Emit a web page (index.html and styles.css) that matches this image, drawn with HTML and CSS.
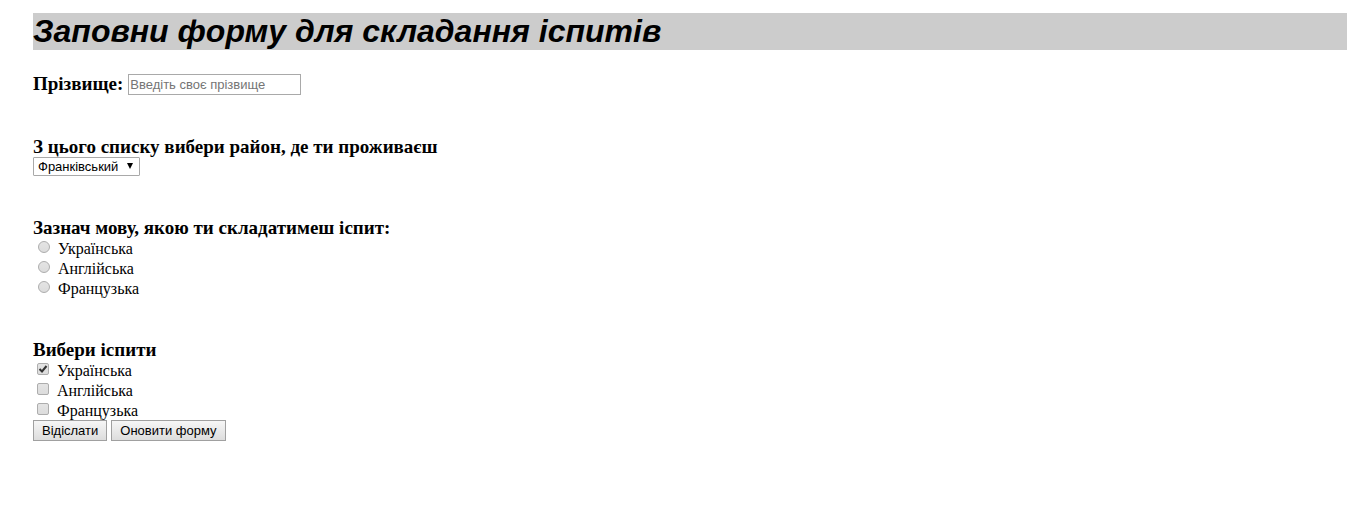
FILE: index.html
```html
<!DOCTYPE html>
<html lang="uk">
<head>
<meta charset="utf-8">
<title>Заповни форму для складання іспитів</title>
<link rel="stylesheet" href="styles.css">
</head>
<body>
<h1 class="title">Заповни форму для складання іспитів</h1>
<form class="form">
  <div class="name-row">
    <label class="heading" for="surname">Прізвище:</label>
    <input class="text-field" type="text" id="surname" name="surname" placeholder="Введіть своє прізвище">
  </div>
  <div class="group">
    <label class="heading" for="district">З цього списку вибери район, де ти проживаєш</label>
    <select class="select" id="district" name="district">
      <option>Франківський</option>
    </select>
  </div>
  <fieldset class="group">
    <legend class="heading">Зазнач мову, якою ти складатимеш іспит:</legend>
    <label class="option option-radio"><input class="radio" type="radio" name="language" value="uk"><span>Українська</span></label>
    <label class="option option-radio"><input class="radio" type="radio" name="language" value="en"><span>Англійська</span></label>
    <label class="option option-radio"><input class="radio" type="radio" name="language" value="fr"><span>Французька</span></label>
  </fieldset>
  <fieldset class="group group-last">
    <legend class="heading">Вибери іспити</legend>
    <label class="option option-check"><input class="check" type="checkbox" name="exam" value="uk" checked><span>Українська</span></label>
    <label class="option option-check"><input class="check" type="checkbox" name="exam" value="en"><span>Англійська</span></label>
    <label class="option option-check"><input class="check" type="checkbox" name="exam" value="fr"><span>Французька</span></label>
  </fieldset>
  <div class="actions">
    <button class="button" type="submit">Відіслати</button>
    <button class="button" type="reset">Оновити форму</button>
  </div>
</form>
</body>
</html>
```
FILE: styles.css
```css
body {
  margin: 13px 8px 8px 33px;
  background: #fff;
  color: #000;
  font-family: "Liberation Serif", "Times New Roman", serif;
  font-size: 16px;
}

.title {
  margin: 0 0 23px;
  background: #ccc;
  font: italic bold 32px/37px "Liberation Sans", Arial, sans-serif;
}

.form {
  display: flex;
  flex-direction: column;
  align-items: flex-start;
}

.heading {
  display: block;
  padding: 0;
  font-size: 19px;
  font-weight: bold;
  line-height: 21px;
}

.name-row {
  display: flex;
  gap: 5px;
  margin-bottom: 41px;
}

.text-field {
  box-sizing: border-box;
  width: 173px;
  height: 21px;
  margin: 1px 0 0;
  padding: 1px;
  border: 1px solid #a9a9a9;
  border-radius: 0;
  background: #fff;
  font: 13px "Liberation Sans", Arial, sans-serif;
}

.text-field::placeholder {
  color: #757575;
}

.group {
  min-width: 0;
  margin: 0 0 41px;
  padding: 0;
  border: 0;
}

.group-last {
  margin-bottom: 0;
}

.select {
  display: block;
  appearance: none;
  box-sizing: border-box;
  width: 107px;
  height: 19px;
  margin: 0;
  padding: 0 18px 0 4px;
  border: 1px solid #a9a9a9;
  border-radius: 1px;
  background: #fff url("data:image/svg+xml,%3Csvg xmlns='http://www.w3.org/2000/svg' width='6' height='6'%3E%3Cpath d='M0 0h6L3 6z'/%3E%3C/svg%3E") no-repeat right 6px top 5px;
  color: #000;
  font: 13px/17px "Liberation Sans", Arial, sans-serif;
}

.option {
  display: flex;
  height: 20px;
  line-height: 22px;
}

.option-radio {
  gap: 8px;
  padding-left: 5px;
}

.option-check {
  gap: 8px;
  padding-left: 4px;
}

.radio,
.check {
  appearance: none;
  box-sizing: border-box;
  width: 12px;
  height: 12px;
  margin: 3px 0 0;
  border: 1px solid #adadad;
  background: linear-gradient(#e4e4e4, #dcdcdc);
}

.radio {
  border-radius: 50%;
}

.check {
  border-radius: 2px;
}

.radio:checked {
  background: radial-gradient(#444 0 3px, #dedede 4px);
}

.check:checked {
  background: url("data:image/svg+xml,%3Csvg xmlns='http://www.w3.org/2000/svg' width='10' height='10'%3E%3Cpath d='M1.5 5l2.5 2.5L8.5 2' fill='none' stroke='%23333' stroke-width='2'/%3E%3C/svg%3E"), linear-gradient(#e4e4e4, #dcdcdc);
}

.actions {
  display: flex;
  gap: 4px;
}

.button {
  box-sizing: border-box;
  height: 21px;
  margin: 0;
  padding: 0 8px;
  border: 1px solid #a0a0a0;
  border-radius: 0;
  background: linear-gradient(#f6f6f6, #dddddd);
  color: #000;
  font: 13px/19px "Liberation Sans", Arial, sans-serif;
}
```
